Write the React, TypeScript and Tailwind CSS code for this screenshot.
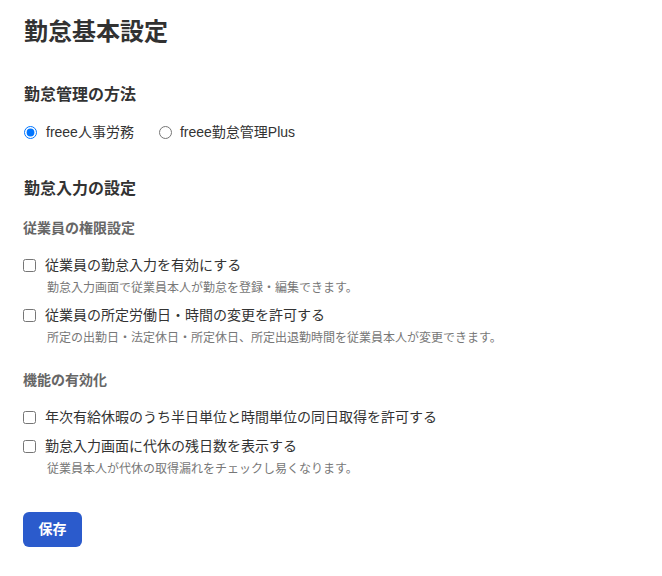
import { useState } from 'react';

const FONT = { fontFamily: '"Liberation Sans", "Noto Sans CJK JP", sans-serif' };

type CheckItem = {
    id: string;
    label: string;
    note?: string;
};

function CheckRow({ item, className }: { item: CheckItem; className?: string }) {
    return (
        <div className={className}>
            <label className="flex h-5 items-center">
                <input type="checkbox" className="m-0 ml-[23px] h-[13px] w-[13px]" />
                <span className="ml-[9px] text-[14px] leading-5 text-[#333]">{item.label}</span>
            </label>
            {item.note ? <p className="ml-[47px] mt-[4px] text-[12px] leading-[18px] text-[#777]">{item.note}</p> : null}
        </div>
    );
}

export default function App() {
    const [method, setMethod] = useState('hr');

    return (
        <div className="min-h-[576px] w-[662px] bg-white pb-6 pt-[16px]" style={FONT}>
            <h1 className="pl-[24px] text-[24px] font-bold leading-8 text-[#323232]">勤怠基本設定</h1>

            <h2 className="mt-[35px] pl-[24px] text-[16px] font-bold leading-6 text-[#333]">勤怠管理の方法</h2>
            <div className="mt-[15px] flex h-5 items-center text-[14px] text-[#333]">
                <label className="flex items-center">
                    <input
                        type="radio"
                        name="method"
                        checked={method === 'hr'}
                        onChange={() => setMethod('hr')}
                        className="m-0 ml-[24px] h-[13px] w-[13px]"
                    />
                    <span className="ml-[9px]">freee人事労務</span>
                </label>
                <label className="ml-[25px] flex items-center">
                    <input
                        type="radio"
                        name="method"
                        checked={method === 'plus'}
                        onChange={() => setMethod('plus')}
                        className="m-0 h-[13px] w-[13px]"
                    />
                    <span className="ml-[8px]">freee勤怠管理Plus</span>
                </label>
            </div>

            <h2 className="mt-[35px] pl-[24px] text-[16px] font-bold leading-6 text-[#333]">勤怠入力の設定</h2>
            <h3 className="mt-[17px] pl-[23px] text-[14px] font-bold leading-5 text-[#666]">従業員の権限設定</h3>
            <CheckRow
                className="mt-[17px]"
                item={{ id: 'input', label: '従業員の勤怠入力を有効にする', note: '勤怠入力画面で従業員本人が勤怠を登録・編集できます。' }}
            />
            <CheckRow
                className="mt-[8px]"
                item={{
                    id: 'workday',
                    label: '従業員の所定労働日・時間の変更を許可する',
                    note: '所定の出勤日・法定休日・所定休日、所定出退勤時間を従業員本人が変更できます。',
                }}
            />

            <h3 className="mt-[23px] pl-[23px] text-[14px] font-bold leading-5 text-[#666]">機能の有効化</h3>
            <CheckRow className="mt-[17px]" item={{ id: 'half', label: '年次有給休暇のうち半日単位と時間単位の同日取得を許可する' }} />
            <CheckRow
                className="mt-[9px]"
                item={{ id: 'comp', label: '勤怠入力画面に代休の残日数を表示する', note: '従業員本人が代休の取得漏れをチェックし易くなります。' }}
            />

            <button
                type="button"
                className="ml-[23px] mt-[34px] h-[35px] w-[59px] rounded-md bg-[#2b5bcc] text-[14px] font-bold text-white"
            >
                保存
            </button>
        </div>
    );
}
